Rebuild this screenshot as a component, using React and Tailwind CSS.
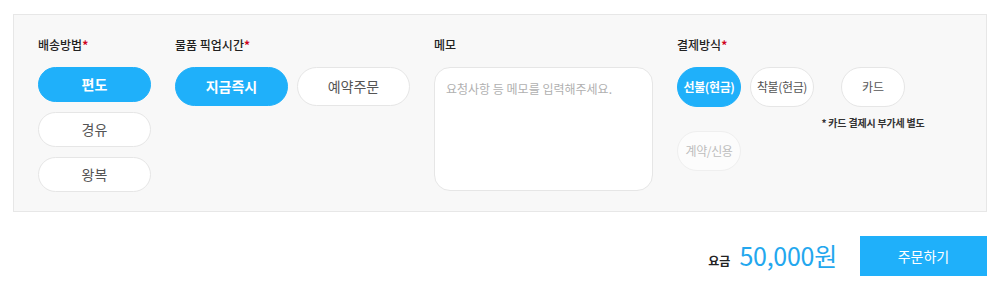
import { useState } from "react";

const FONT = { fontFamily: '"Noto Sans CJK KR", "Noto Sans", sans-serif' };

const Label = ({ children, required }) => (
  <p className="text-[12px] leading-[18px] font-medium text-[#222] mb-[13px] whitespace-nowrap">
    {children}
    {required && <span className="text-[#d0021b] font-bold">*</span>}
  </p>
);

const Pill = ({ active, disabled, className, children, onClick }) => (
  <button
    type="button"
    onClick={onClick}
    disabled={disabled}
    className={
      "rounded-full border whitespace-nowrap flex items-center justify-center " +
      (active
        ? "bg-[#1fb0fa] border-[#1fb0fa] text-white font-semibold "
        : disabled
        ? "bg-[#fcfcfc] border-[#efefef] text-[#bdbdbd] "
        : "bg-white border-[#e6e6e6] text-[#555] ") +
      className
    }
  >
    {children}
  </button>
);

export default function App() {
  const [delivery, setDelivery] = useState("편도");
  const [pickup, setPickup] = useState("지금즉시");
  const [pay, setPay] = useState("선불(현금)");

  return (
    <div style={FONT} className="w-[1000px] h-[288px] bg-white pt-[14px] px-[13px]">
      {/* FORM PANEL */}
      <div className="w-[974px] border border-[#e7e7e7] bg-[#f8f8f8] pt-[21px] pb-[19px] pl-[24px] flex gap-[24px]">
        {/* 배송방법 */}
        <div className="w-[113px]">
          <Label required>배송방법</Label>
          <div className="flex flex-col gap-[10px]">
            {["편도", "경유", "왕복"].map((d) => (
              <Pill
                key={d}
                active={delivery === d}
                onClick={() => setDelivery(d)}
                className="h-[35px] w-[113px] text-[14px]"
              >
                {d}
              </Pill>
            ))}
          </div>
        </div>

        {/* 물품 픽업시간 */}
        <div>
          <Label required>물품 픽업시간</Label>
          <div className="flex gap-[9px]">
            {["지금즉시", "예약주문"].map((p) => (
              <Pill
                key={p}
                active={pickup === p}
                onClick={() => setPickup(p)}
                className="h-[39px] w-[113px] text-[14px]"
              >
                {p}
              </Pill>
            ))}
          </div>
        </div>

        {/* 메모 */}
        <div>
          <Label>메모</Label>
          <textarea
            style={FONT}
            placeholder="요청사항 등 메모를 입력해주세요."
            className="block w-[219px] h-[124px] resize-none rounded-[16px] border border-[#e6e6e6] bg-white px-[11px] py-[12px] text-[12px] leading-[18px] text-[#333] placeholder:text-[#b0b0b0] outline-none"
          />
        </div>

        {/* 결제방식 */}
        <div>
          <Label required>결제방식</Label>
          <div className="flex gap-[9px] items-start">
            {["선불(현금)", "착불(현금)"].map((p) => (
              <Pill
                key={p}
                active={pay === p}
                onClick={() => setPay(p)}
                className="h-[40px] w-[64px] text-[12px] tracking-[-0.03em]"
              >
                {p}
              </Pill>
            ))}
            <div className="w-[100px] flex flex-col items-center">
              <Pill
                active={pay === "카드"}
                onClick={() => setPay("카드")}
                className="h-[40px] w-[64px] text-[12px]"
              >
                카드
              </Pill>
              <p className="mt-[9px] text-[10px] leading-[14px] font-bold text-[#333] whitespace-nowrap tracking-[-0.02em]">
                * 카드 결제시 부가세 별도
              </p>
            </div>
          </div>
          <div className="mt-px">
            <Pill disabled className="h-[40px] w-[64px] text-[12px] tracking-[-0.03em]">
              계약/신용
            </Pill>
          </div>
        </div>
      </div>

      {/* TOTAL */}
      <div className="w-[974px] mt-[24px] flex items-center justify-end">
        <div className="flex items-baseline mr-[23px]">
          <span className="text-[12px] font-bold text-[#222] mr-[9px]">요금</span>
          <span className="text-[25px] text-[#23a7ee] tracking-[-0.01em]">50,000원</span>
        </div>
        <button
          type="button"
          className="w-[127px] h-[40px] bg-[#1fb0fa] text-white text-[14px]"
        >
          주문하기
        </button>
      </div>
    </div>
  );
}
